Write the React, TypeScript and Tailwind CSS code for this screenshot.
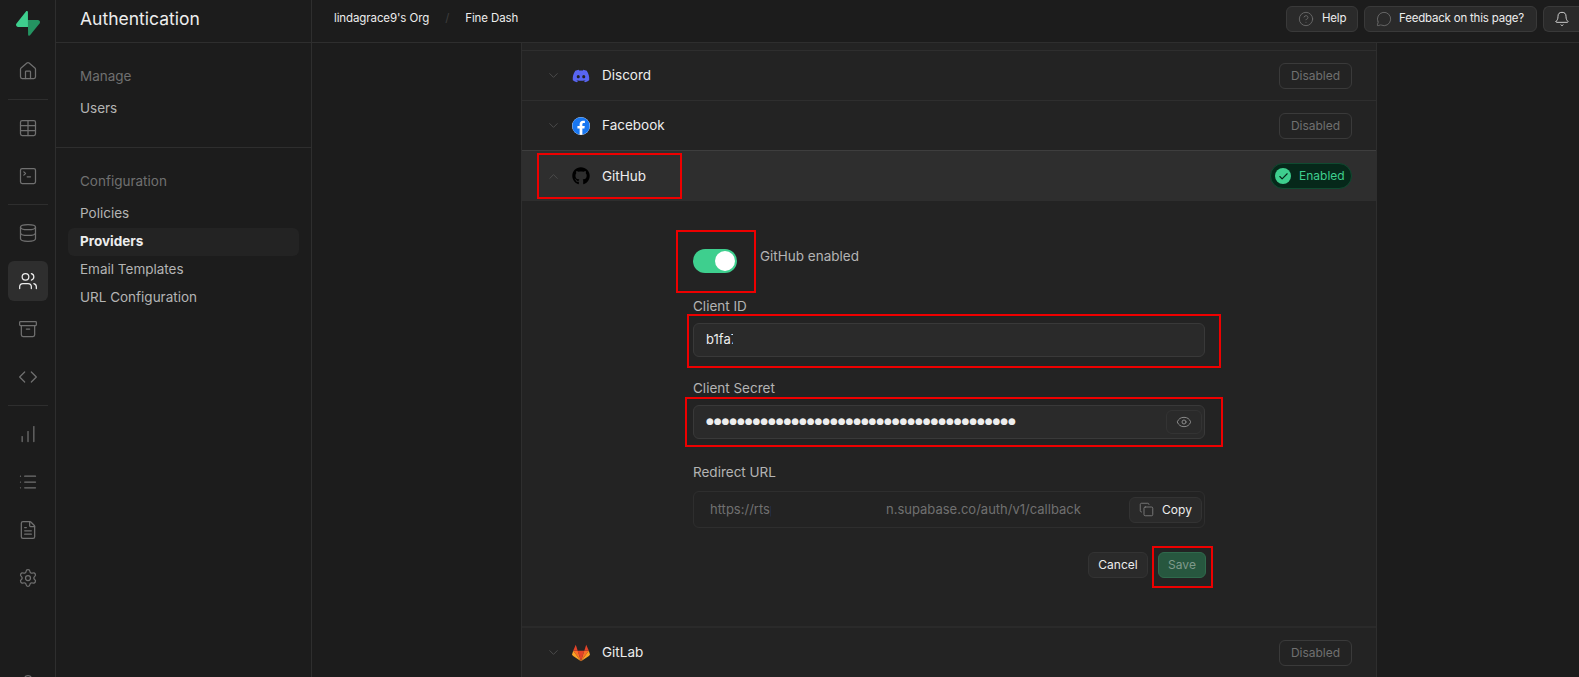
import {
  Archive,
  Bell,
  Check,
  ChartNoAxesColumnIncreasing,
  ChevronDown,
  ChevronUp,
  CircleHelp,
  Code,
  Copy,
  Database,
  Eye,
  FileText,
  Home,
  List,
  MessageCircle,
  Settings,
  SquareTerminal,
  Table,
  User,
  Users,
} from "lucide-react";
import { FaDiscord, FaFacebook, FaGithub } from "react-icons/fa";

function SupabaseLogo() {
  return (
    <svg viewBox="0 0 109 113" className="h-[25px] w-[24px]" fill="none">
      <path
        d="M63.7076 110.284C60.8481 113.885 55.0502 111.912 54.9813 107.314L53.9738 40.0627L99.1935 40.0627C107.384 40.0627 111.952 49.5228 106.859 55.9374L63.7076 110.284Z"
        fill="#249361"
      />
      <path
        d="M45.317 2.07103C48.1765 -1.53037 53.9745 0.442937 54.0434 5.041L54.4849 72.2922H9.83113C1.64038 72.2922 -2.92775 62.8321 2.1655 56.4175L45.317 2.07103Z"
        fill="#3ECF8E"
      />
    </svg>
  );
}

function GitLabLogo() {
  return (
    <svg viewBox="0 0 24 23" className="h-[18px] w-[18px]">
      <polygon points="12,22.5 7.6,8.5 16.4,8.5" fill="#e24329" />
      <polygon points="12,22.5 7.6,8.5 1.6,8.5" fill="#fc6d26" />
      <polygon points="12,22.5 16.4,8.5 22.4,8.5" fill="#fc6d26" />
      <polygon points="1.6,8.5 0.2,13 1,15.2 12,22.5" fill="#fca326" />
      <polygon points="22.4,8.5 23.8,13 23,15.2 12,22.5" fill="#fca326" />
      <polygon points="1.6,8.5 7.6,8.5 5,0.5" fill="#e24329" />
      <polygon points="22.4,8.5 16.4,8.5 19,0.5" fill="#e24329" />
    </svg>
  );
}

function RailIcon({ icon: Icon, active }: { icon: typeof Home; active?: boolean }) {
  return (
    <div
      className={`flex h-10 w-10 shrink-0 items-center justify-center rounded-md ${
        active ? "bg-[#2e2e2e] text-[#ededed]" : "text-[#707070]"
      }`}
    >
      <Icon size={20} strokeWidth={1.5} />
    </div>
  );
}

function RailDivider() {
  return <div className="my-2 h-px w-10 shrink-0 bg-[#2e2e2e]" />;
}

function Rail() {
  return (
    <div className="flex h-full w-[56px] shrink-0 flex-col items-center border-r border-[#2e2e2e]">
      <div className="flex h-[51px] shrink-0 items-center justify-center pb-[5px]">
        <SupabaseLogo />
      </div>
      <RailIcon icon={Home} />
      <RailDivider />
      <div className="flex shrink-0 flex-col gap-2">
        <RailIcon icon={Table} />
        <RailIcon icon={SquareTerminal} />
      </div>
      <RailDivider />
      <div className="flex shrink-0 flex-col gap-2">
        <RailIcon icon={Database} />
        <RailIcon icon={Users} active />
        <RailIcon icon={Archive} />
        <RailIcon icon={Code} />
      </div>
      <RailDivider />
      <div className="flex shrink-0 flex-col gap-2">
        <RailIcon icon={ChartNoAxesColumnIncreasing} />
        <RailIcon icon={List} />
        <RailIcon icon={FileText} />
        <RailIcon icon={Settings} />
      </div>
      <div className="mt-[75px] shrink-0 text-[#707070]">
        <User size={20} strokeWidth={1.5} />
      </div>
    </div>
  );
}

function SideLink({ label, active }: { label: string; active?: boolean }) {
  return (
    <div
      className={`flex h-7 items-center rounded-md px-3 pb-[2px] text-[13.5px] ${
        active ? "bg-[#232323] font-bold text-[#ededed]" : "text-[#b4b4b4]"
      }`}
    >
      {label}
    </div>
  );
}

function Sidebar() {
  return (
    <div className="flex h-full w-[256px] shrink-0 flex-col border-r border-[#2e2e2e]">
      <div className="flex h-[43px] shrink-0 items-center border-b border-[#2e2e2e] px-6 pb-[4px] text-[17.5px] text-[#ededed]">
        Authentication
      </div>
      <div className="flex flex-col gap-1 border-b border-[#2e2e2e] px-3 pb-6 pt-5">
        <div className="flex h-7 items-center px-3 pb-[2px] text-[13.5px] text-[#707070]">Manage</div>
        <SideLink label="Users" />
      </div>
      <div className="flex flex-col px-3 pt-5">
        <div className="mb-1 flex h-7 items-center px-3 pb-[2px] text-[13.5px] text-[#707070]">Configuration</div>
        <SideLink label="Policies" />
        <SideLink label="Providers" active />
        <SideLink label="Email Templates" />
        <SideLink label="URL Configuration" />
      </div>
    </div>
  );
}

function TopBar() {
  return (
    <div className="flex h-[43px] shrink-0 items-center justify-between border-b border-[#2e2e2e] pb-[4px] pl-[22px]">
      <div className="flex items-center text-[11.5px] tracking-[-0.1px] text-[#ededed]">
        <span>lindagrace9's Org</span>
        <span className="mx-[16px] text-[#3e3e3e]">/</span>
        <span>Fine Dash</span>
      </div>
      <div className="flex items-center gap-[6px] text-[11.5px] tracking-[-0.2px] text-[#ededed]">
        <div className="flex h-[26px] w-[72px] items-center gap-[8px] rounded-md border border-[#393939] bg-[#2a2a2a] pl-[11px]">
          <CircleHelp size={16} strokeWidth={1.25} className="text-[#707070]" />
          Help
        </div>
        <div className="flex h-[26px] w-[173px] items-center gap-[7px] rounded-md border border-[#393939] bg-[#2a2a2a] pl-[11px]">
          <MessageCircle size={16} strokeWidth={1.25} className="text-[#707070]" />
          Feedback on this page?
        </div>
        <div className="flex h-[26px] w-[36px] items-center justify-center rounded-l-md border-y border-l border-[#393939] bg-[#2a2a2a]">
          <Bell size={16} strokeWidth={1.25} />
        </div>
      </div>
    </div>
  );
}

function DisabledBadge() {
  return (
    <div className="flex h-[26px] w-[73px] items-center justify-center rounded-md border border-[#3a3a3a] text-xs text-[#707070]">
      Disabled
    </div>
  );
}

function ProviderRow({ name, logo }: { name: string; logo: React.ReactNode }) {
  return (
    <div className="flex h-[50px] shrink-0 items-center justify-between border-b border-[#2e2e2e] pl-[24px] pr-6">
      <div className="flex items-center">
        <ChevronDown size={15} strokeWidth={1.5} className="text-[#4d4d4d]" />
        <div className="ml-[11px] flex w-[18px] justify-center">{logo}</div>
        <span className="ml-[12px] text-[13.5px] text-[#ededed]">{name}</span>
      </div>
      <DisabledBadge />
    </div>
  );
}

const secretDots = "●".repeat(40);

function GitHubPanel() {
  return (
    <div className="shrink-0 border-b-2 border-[#2a2a2a]">
      <div className="-mt-px flex h-[51px] items-center justify-between border-t border-[#3e3e3e] bg-[#2e2e2e] pl-[24px] pr-6">
        <div className="flex items-center">
          <ChevronUp size={15} strokeWidth={1.5} className="text-[#4d4d4d]" />
          <div className="ml-[11px] flex w-[18px] justify-center">
            <FaGithub size={18} className="text-black" />
          </div>
          <span className="ml-[12px] text-[13.5px] text-[#ededed]">GitHub</span>
        </div>
        <div className="flex h-[26px] w-[82px] items-center gap-[8px] rounded-full border border-[#0f4a30] bg-[#06281a] pl-[4px] text-xs text-[#3ecf8e]">
          <span className="flex h-4 w-4 items-center justify-center rounded-full bg-[#3ecf8e] text-[#06281a]">
            <Check size={11} strokeWidth={2.5} />
          </span>
          Enabled
        </div>
      </div>
      <div className="mx-auto h-[425px] w-[512px] pt-[48px]">
        <div className="flex items-start">
          <div className="flex h-6 w-11 items-center justify-end rounded-full bg-[#3ecf8e] pr-[2px]">
            <div className="h-5 w-5 rounded-full bg-white" />
          </div>
          <span className="ml-[23px] -mt-[3px] text-[13.5px] text-[#b4b4b4]">GitHub enabled</span>
        </div>

        <div className="mt-[23px] h-5 text-[13.5px] leading-5 text-[#b4b4b4]">Client ID</div>
        <div className="mt-[7px] flex h-[34px] items-center rounded-md border border-[#393939] bg-[#2a2a2a] pl-3 text-[13px] text-[#ededed]">
          <span className="w-[27px] overflow-hidden whitespace-nowrap">b1fa7</span>
        </div>

        <div className="mt-[21px] h-5 text-[13.5px] leading-5 text-[#b4b4b4]">Client Secret</div>
        <div className="mt-[7px] flex h-[34px] items-center justify-between rounded-md border border-[#393939] bg-[#2a2a2a] pl-3 pr-[2px]">
          <span className="font-['DejaVu_Sans'] text-[8.9px] text-[#ededed]">{secretDots}</span>
          <div className="flex h-6 w-9 items-center justify-center rounded-md border border-[#333333] bg-[#2a2a2a] text-[#898989]">
            <Eye size={16} strokeWidth={1.5} />
          </div>
        </div>

        <div className="mt-[23px] h-5 text-[13.5px] leading-5 text-[#b4b4b4]">Redirect URL</div>
        <div className="mt-[9px] flex h-[37px] items-center rounded-md border border-[#2e2e2e] pl-4 pr-[2px] text-[13px] text-[#707070]">
          <span className="w-[61px] overflow-hidden whitespace-nowrap">https://rtsp</span>
          <span className="ml-[115px]">n.supabase.co/auth/v1/callback</span>
          <div className="ml-auto flex h-[26px] w-[73px] items-center justify-center gap-[8px] rounded-md border border-[#333333] bg-[#2a2a2a] text-xs text-[#ededed]">
            <Copy size={15} strokeWidth={1.25} className="text-[#898989]" />
            Copy
          </div>
        </div>

        <div className="-mr-px mt-6 flex justify-end gap-[10px] text-xs">
          <div className="flex h-[26px] w-[60px] items-center justify-center rounded-md border border-[#333333] bg-[#2a2a2a] text-[#ededed]">
            Cancel
          </div>
          <div className="flex h-[26px] w-[48px] items-center justify-center rounded-md border border-[#2f6a4c] bg-[#27573f] text-[#7f9a8b]">
            Save
          </div>
        </div>
      </div>
    </div>
  );
}

function Main() {
  return (
    <div className="flex-1 overflow-hidden pl-[209px]">
      <div className="flex h-full w-[856px] flex-col border-x border-[#2e2e2e] bg-[#232323]">
        <div className="h-[8px] shrink-0 border-b border-[#2e2e2e]" />
        <ProviderRow name="Discord" logo={<FaDiscord size={20} className="text-[#5865f2]" />} />
        <ProviderRow
          name="Facebook"
          logo={
            <span className="flex h-[18px] w-[18px] items-center justify-center rounded-full bg-white">
              <FaFacebook size={18} className="text-[#1877f2]" />
            </span>
          }
        />
        <GitHubPanel />
        <ProviderRow name="GitLab" logo={<GitLabLogo />} />
      </div>
    </div>
  );
}

export default function App() {
  const marks = [
    "left-[537px] top-[153px] h-[46px] w-[145px]",
    "left-[676px] top-[230px] h-[63px] w-[80px]",
    "left-[687px] top-[314px] h-[54px] w-[534px]",
    "left-[685px] top-[397px] h-[50px] w-[538px]",
    "left-[1152px] top-[546px] h-[42px] w-[61px]",
  ];
  return (
    <div
      className="relative flex h-screen w-full overflow-hidden bg-[#1c1c1c]"
      style={{ fontFamily: "Inter, 'Noto Sans', sans-serif" }}
    >
      <Rail />
      <Sidebar />
      <div className="flex min-w-0 flex-1 flex-col">
        <TopBar />
        <Main />
      </div>
      {/* red review marks drawn on top of the screenshot */}
      {marks.map((m) => (
        <div key={m} className={`pointer-events-none absolute border-2 border-[#ee0000] ${m}`} />
      ))}
    </div>
  );
}
